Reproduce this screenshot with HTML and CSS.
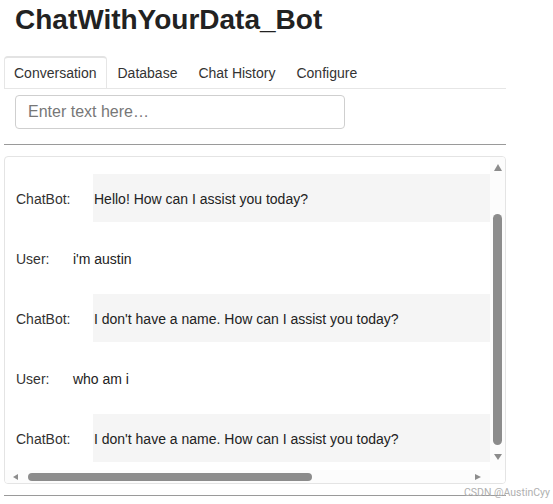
FILE: index.html
```html
<!DOCTYPE html>
<html lang="en">
<head>
<meta charset="utf-8">
<title>ChatWithYourData_Bot</title>
<link rel="stylesheet" href="styles.css">
</head>
<body>
<div class="page">
  <h1 class="title">ChatWithYourData_Bot</h1>
  <div class="tabs">
    <div class="tab active">Conversation</div>
    <div class="tab">Database</div>
    <div class="tab">Chat History</div>
    <div class="tab">Configure</div>
  </div>
  <div class="panel">
    <input class="entry" type="text" placeholder="Enter text here…">
    <div class="rule"></div>
    <div class="chatbox">
      <div class="chat-view">
        <div class="msg"><span class="who">ChatBot:</span><div class="text bot">Hello! How can I assist you today?</div></div>
        <div class="msg"><span class="who">User:</span><div class="text">i'm austin</div></div>
        <div class="msg"><span class="who">ChatBot:</span><div class="text bot">I don't have a name. How can I assist you today?</div></div>
        <div class="msg"><span class="who">User:</span><div class="text">who am i</div></div>
        <div class="msg"><span class="who">ChatBot:</span><div class="text bot">I don't have a name. How can I assist you today?</div></div>
      </div>
      <div class="vscroll">
        <div class="arrow-up"></div>
        <div class="vthumb"></div>
        <div class="arrow-down"></div>
      </div>
      <div class="hscroll">
        <div class="arrow-left"></div>
        <div class="hthumb"></div>
        <div class="hspace"></div>
        <div class="arrow-right"></div>
      </div>
      <div class="corner"></div>
    </div>
    <div class="rule bottom"></div>
  </div>
</div>
<div class="watermark">CSDN @AustinCyy</div>
</body>
</html>
```
FILE: styles.css
```css
* { box-sizing: border-box; }
html, body { margin: 0; padding: 0; background: #fff; }
body {
  font-family: "Liberation Sans", Arial, sans-serif;
  color: #222;
  width: 553px;
  height: 504px;
  overflow: hidden;
}
.page {
  width: 506px;
  padding-left: 4px;
}
.title {
  margin: 4px 0 0 11px;
  font-size: 28px;
  line-height: 32px;
  font-weight: bold;
  color: #222;
}
.tabs {
  margin-top: 20px;
  display: flex;
  border-bottom: 1px solid #e6e6e6;
}
.tab {
  font-size: 14px;
  line-height: 30px;
  padding: 1px 9px 0 10px;
  border: 1px solid transparent;
  border-bottom: 0;
  color: #333;
}
.tab.active {
  padding: 0 9px;
  border-color: #e6e6e6;
  border-top: 2px solid #e3e3e3;
  border-radius: 4px 4px 0 0;
  color: #333;
}
.entry {
  display: block;
  margin: 6px 0 0 11px;
  width: 330px;
  height: 34px;
  border: 1px solid #cfcfcf;
  border-radius: 4px;
  padding: 0 12px;
  font-family: "Liberation Sans", Arial, sans-serif;
  font-size: 16px;
  color: #222;
  background: #fff;
  outline: none;
}
.entry::placeholder { color: #777; }
.rule {
  margin-top: 15px;
  height: 1px;
  background: #9a9a9a;
}
.rule.bottom { margin-top: 11px; }
.chatbox {
  margin-top: 11px;
  height: 328px;
  border: 1px solid #e4e4e4;
  border-radius: 4px;
  display: grid;
  grid-template-columns: 1fr 15px;
  grid-template-rows: 1fr 13px;
  overflow: hidden;
}
.chat-view {
  padding-top: 11px;
  overflow: hidden;
}
.msg {
  display: flex;
  align-items: center;
  height: 60px;
  padding-left: 11px;
  padding-top: 1px;
  font-size: 14px;
}
.who {
  color: #333;
  margin-right: 22.5px;
  white-space: nowrap;
}
.text {
  flex: 1;
  height: 48px;
  display: flex;
  align-items: center;
  padding-left: 1px;
  padding-top: 2px;
  margin-top: -1px;
  color: #222;
  white-space: nowrap;
}
.text.bot { background: #f5f5f5; }
.vscroll {
  background: #fcfcfc;
  display: flex;
  flex-direction: column;
  align-items: center;
  padding-top: 7px;
}
.arrow-up {
  width: 0; height: 0;
  border-left: 4.5px solid transparent;
  border-right: 4.5px solid transparent;
  border-bottom: 7px solid #8c8c8c;
}
.vthumb {
  margin-top: 43px;
  width: 9px;
  height: 231px;
  border-radius: 5px;
  background: #8c8c8c;
}
.arrow-down {
  margin-top: 9px;
  width: 0; height: 0;
  border-left: 4.5px solid transparent;
  border-right: 4.5px solid transparent;
  border-top: 6px solid #8c8c8c;
}
.hscroll {
  background: #fcfcfc;
  display: flex;
  align-items: center;
  padding: 0 9px 0 8px;
}
.arrow-left {
  width: 0; height: 0;
  border-top: 3.5px solid transparent;
  border-bottom: 3.5px solid transparent;
  border-right: 5px solid #8c8c8c;
}
.hthumb {
  margin-left: 10px;
  width: 284px;
  height: 8px;
  border-radius: 4px;
  background: #8c8c8c;
}
.hspace { flex: 1; }
.arrow-right {
  width: 0; height: 0;
  border-top: 3.5px solid transparent;
  border-bottom: 3.5px solid transparent;
  border-left: 6px solid #8c8c8c;
}
.corner { background: #fff; }
.watermark {
  position: absolute;
  left: 464px;
  top: 487px;
  font-family: Roboto, "Noto Sans", sans-serif;
  font-size: 10.5px;
  line-height: 12px;
  color: #b0b0b0;
  white-space: nowrap;
}
```
